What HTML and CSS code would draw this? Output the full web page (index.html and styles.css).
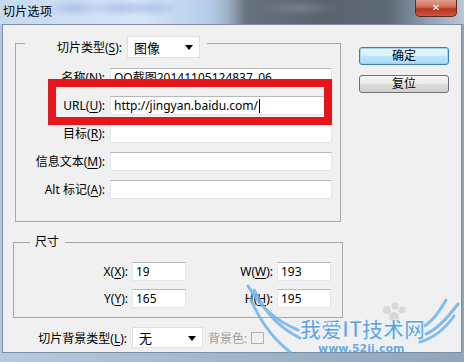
FILE: index.html
```html
<!DOCTYPE html>
<html>
<head>
    <title>切片选项</title>
    <link rel="stylesheet" href="styles.css">
</head>
<body>
    <div class="window">
        <div class="titlebar">
            <span class="title">切片选项</span>
            <div class="close">&#10005;</div>
        </div>
        <div class="dialog">
            <div class="left">
                <div class="group main-group">
                    <div class="legend type-legend">
                        <span class="label type-label">切片类型(<u>S</u>):</span>
                        <div class="select type-select"><span>图像</span><i class="arrow"></i></div>
                    </div>
                    <div class="fields">
                        <span class="label">名称(<u>N</u>):</span>
                        <div class="input">QQ截图20141105124837_06</div>
                        <span class="label">URL(<u>U</u>):</span>
                        <div class="input">http://jingyan.baidu.com/<span class="caret"></span></div>
                        <span class="label">目标(<u>R</u>):</span>
                        <div class="input"></div>
                        <span class="label">信息文本(<u>M</u>):</span>
                        <div class="input"></div>
                        <span class="label">Alt 标记(<u>A</u>):</span>
                        <div class="input"></div>
                    </div>
                </div>
                <div class="group size-group">
                    <div class="legend size-legend">尺寸</div>
                    <div class="size-fields">
                        <span class="label">X(<u>X</u>):</span>
                        <div class="input">19</div>
                        <span class="label">W(<u>W</u>):</span>
                        <div class="input">193</div>
                        <span class="label">Y(<u>Y</u>):</span>
                        <div class="input">165</div>
                        <span class="label">H(<u>H</u>):</span>
                        <div class="input">195</div>
                    </div>
                </div>
                <div class="bg-row">
                    <span class="label bg-label">切片背景类型(<u>L</u>):</span>
                    <div class="select bg-select"><span>无</span><i class="arrow"></i></div>
                    <span class="disabled">背景色:</span>
                    <div class="swatch"></div>
                </div>
            </div>
            <div class="buttons">
                <div class="btn btn-default">确定</div>
                <div class="btn">复位</div>
            </div>
        </div>
        <div class="highlight"></div>
        <div class="watermark">
            <svg width="224" height="82" viewBox="0 0 224 82">
                <g fill="none" stroke="#6fb4ec" stroke-width="3" stroke-linecap="round" opacity="0.85">
                    <path d="M8 6 C20 26 34 40 58 50"/>
                    <path d="M10 18 C20 40 30 56 50 72"/>
                    <path d="M14 10 C26 34 40 48 60 58"/>
                    <path d="M218 24 C206 40 196 50 186 54"/>
                    <path d="M214 36 C204 50 194 58 180 62"/>
                    <path d="M206 20 C198 34 192 42 184 46"/>
                </g>
                <g fill="#d8d8d8">
                    <circle cx="147" cy="30" r="4"/>
                    <circle cx="155" cy="26" r="3.5"/>
                    <circle cx="162" cy="30" r="3.5"/>
                    <circle cx="154" cy="37" r="5"/>
                </g>
                <text x="60" y="57" class="wm-title">我爱IT技术网</text>
                <text x="78" y="72" class="wm-url">www.52ij.com</text>
            </svg>
        </div>
    </div>
</body>
</html>
```

FILE: styles.css
```css
body {
    margin: 0;
    width: 464px;
    height: 362px;
    overflow: hidden;
    font-family: "Noto Sans", "Noto Sans CJK SC", sans-serif;
    font-size: 12px;
    color: #000;
    background: #a9bdd0;
}

.window {
    position: relative;
    width: 464px;
    height: 362px;
    background: linear-gradient(90deg, #b4cae0 0%, #9fb6cc 50%, #8fa5ba 100%);
}

.titlebar {
    height: 24px;
    display: flex;
    justify-content: space-between;
    align-items: flex-start;
    background:
        radial-gradient(ellipse 30px 9px at 75px 8px, rgba(120, 130, 200, 0.35), transparent),
        radial-gradient(ellipse 25px 9px at 118px 8px, rgba(110, 120, 200, 0.3), transparent),
        radial-gradient(ellipse 30px 9px at 150px 8px, rgba(110, 130, 200, 0.3), transparent),
        radial-gradient(ellipse 40px 8px at 300px 8px, rgba(160, 170, 180, 0.35), transparent),
        linear-gradient(90deg, #c5daf1 0%, #d4e5f7 30%, #b5cdea 45%, #9fb3c8 49%, #66737f 53%, #58636e 70%, #5d6a76 84%, #8f9fae 92%, #b9c8d6 100%);
}

.title {
    padding: 3px 0 0 3px;
    line-height: 18px;
    font-size: 12px;
    letter-spacing: 0.3px;
}

.close {
    width: 42px;
    height: 17px;
    margin-right: 7px;
    box-sizing: border-box;
    border: 1px solid #5a2a22;
    border-top: none;
    border-radius: 0 0 5px 5px;
    background: linear-gradient(180deg, #e0a08f 0%, #cf6a55 45%, #b8321b 55%, #d2553c 100%);
    color: #fff;
    font-family: "DejaVu Sans", sans-serif;
    font-size: 10px;
    font-weight: bold;
    line-height: 15px;
    text-align: center;
}

.dialog {
    margin-left: 2px;
    width: 460px;
    height: 329px;
    box-sizing: border-box;
    border: 1px solid #7f8d9b;
    background: #f0f0f0;
    display: flex;
}

.left {
    width: 339px;
    padding-left: 10px;
    box-sizing: border-box;
}

.group {
    border: 1px solid #a8a8a8;
    box-sizing: border-box;
}

.main-group {
    margin: 18px 0 0 2px;
    width: 326px;
    padding-right: 7px;
}

.legend {
    background: #f0f0f0;
    width: fit-content;
}

.type-legend {
    display: flex;
    align-items: center;
    gap: 5px;
    height: 22px;
    margin: -8px 0 0 9px;
    padding: 0 7px 0 27px;
}

.type-label {
    width: 70px;
    text-align: right;
    white-space: nowrap;
}

.label u {
    text-decoration: underline;
    text-underline-offset: 2px;
}

.select {
    background: #fff;
    border: 1px solid #e0e0e0;
    box-sizing: border-box;
    display: flex;
    align-items: center;
    justify-content: space-between;
    padding: 0 6px 0 6px;
    font-size: 13px;
}

.type-select {
    width: 73px;
    height: 22px;
}

.arrow {
    width: 0;
    height: 0;
    border-left: 4px solid transparent;
    border-right: 4px solid transparent;
    border-top: 5px solid #000;
    margin-top: 1px;
}

.fields {
    display: grid;
    grid-template-columns: 89px 222px;
    grid-auto-rows: 19px;
    column-gap: 5px;
    row-gap: 9px;
    margin-top: 10px;
    padding-bottom: 22px;
}

.fields .label,
.size-fields .label {
    text-align: right;
    line-height: 19px;
    white-space: nowrap;
}

.input {
    background: #fff;
    border: 1px solid #e3e6ea;
    border-top-color: #b5b8bd;
    box-sizing: border-box;
    padding-left: 3px;
    line-height: 17px;
    font-size: 12px;
    white-space: nowrap;
    overflow: hidden;
    display: flex;
    align-items: center;
}

.caret {
    display: inline-block;
    width: 0;
    height: 14px;
    border-left: 1px solid #000;
    margin-left: 1px;
}

.size-group {
    margin-top: 20px;
    width: 330px;
    padding-right: 10px;
}

.size-legend {
    margin: -9px 0 0 16px;
    padding: 0 6px 0 5px;
    line-height: 16px;
    font-size: 12px;
}

.size-fields {
    display: grid;
    grid-template-columns: 118px 54px 91px 54px;
    grid-auto-rows: 19px;
    row-gap: 8px;
    margin-top: 12px;
    padding-bottom: 9px;
}

.size-fields .label {
    padding-right: 4px;
}

.bg-row {
    display: flex;
    align-items: center;
    margin-top: 9px;
}

.bg-label {
    width: 114px;
    text-align: right;
    white-space: nowrap;
}

.bg-select {
    width: 71px;
    height: 21px;
    margin-left: 5px;
}

.disabled {
    color: #a0a0a0;
    margin-left: 5px;
}

.swatch {
    width: 13px;
    height: 12px;
    margin-left: 4px;
    border: 1px solid #b0b0b0;
    box-sizing: border-box;
}

.buttons {
    margin-left: 17px;
    padding-top: 22px;
    display: flex;
    flex-direction: column;
    gap: 10px;
}

.btn {
    width: 90px;
    height: 18px;
    box-sizing: border-box;
    border: 1px solid #707070;
    border-radius: 3px;
    background: linear-gradient(180deg, #f4f4f4 0%, #ebebeb 50%, #dddddd 51%, #cfcfcf 100%);
    text-align: center;
    line-height: 16px;
    font-size: 12px;
}

.btn-default {
    border-color: #3c7fb1;
    background: linear-gradient(180deg, #e9f5fd 0%, #d9effc 50%, #bee6fd 51%, #a7d9f5 100%);
    box-shadow: inset 0 0 0 1px #9ed2f0;
}

.highlight {
    position: absolute;
    left: 48px;
    top: 79px;
    width: 284px;
    height: 46px;
    box-sizing: border-box;
    border: 8px solid #e6141c;
}

.watermark {
    position: absolute;
    left: 240px;
    top: 280px;
    width: 224px;
    height: 82px;
}

.wm-title {
    font-family: "Noto Sans CJK SC", sans-serif;
    font-size: 21px;
    font-weight: bold;
    fill: #4e9be0;
    stroke: #ffffff;
    stroke-width: 0.6px;
    opacity: 0.9;
}

.wm-url {
    font-family: "DejaVu Sans", sans-serif;
    font-size: 11px;
    font-weight: bold;
    fill: #5aa3e3;
    opacity: 0.9;
}
```
